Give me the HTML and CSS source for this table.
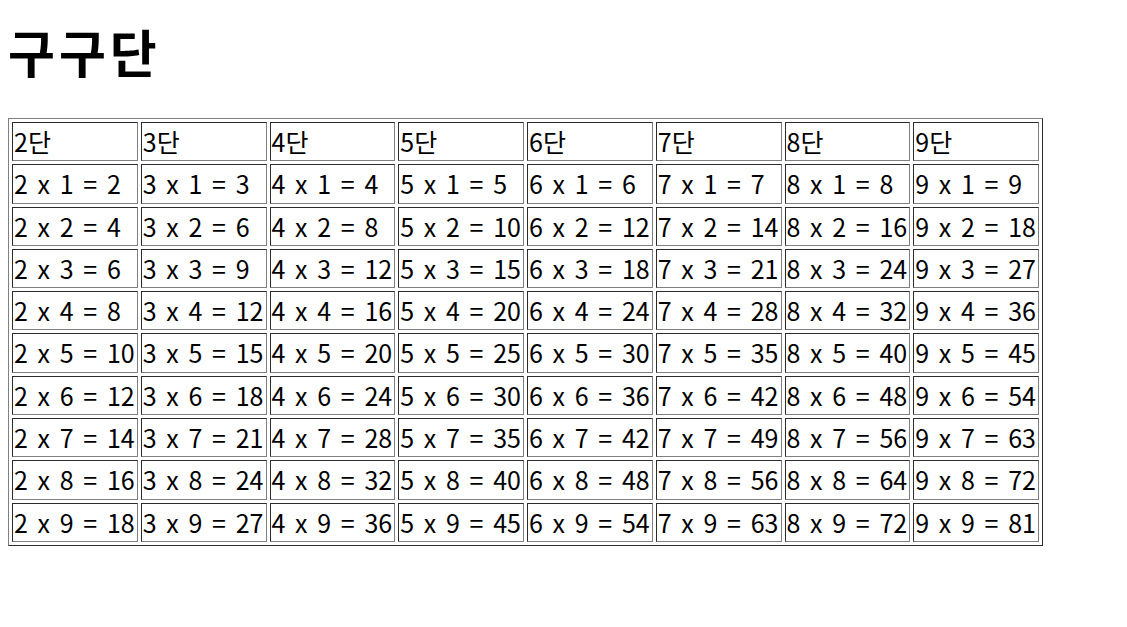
FILE: index.html
```html
<!DOCTYPE html>
<html lang="ko">
<head>
<meta charset="utf-8">
<title>구구단</title>
<link rel="stylesheet" href="styles.css">
</head>
<body>
<h1 class="title">구구단</h1>
<table class="gugu">
<tr><td>2단</td><td>3단</td><td>4단</td><td>5단</td><td>6단</td><td>7단</td><td>8단</td><td>9단</td></tr>
<tr><td>2 x 1 = 2</td><td>3 x 1 = 3</td><td>4 x 1 = 4</td><td>5 x 1 = 5</td><td>6 x 1 = 6</td><td>7 x 1 = 7</td><td>8 x 1 = 8</td><td>9 x 1 = 9</td></tr>
<tr><td>2 x 2 = 4</td><td>3 x 2 = 6</td><td>4 x 2 = 8</td><td>5 x 2 = 10</td><td>6 x 2 = 12</td><td>7 x 2 = 14</td><td>8 x 2 = 16</td><td>9 x 2 = 18</td></tr>
<tr><td>2 x 3 = 6</td><td>3 x 3 = 9</td><td>4 x 3 = 12</td><td>5 x 3 = 15</td><td>6 x 3 = 18</td><td>7 x 3 = 21</td><td>8 x 3 = 24</td><td>9 x 3 = 27</td></tr>
<tr><td>2 x 4 = 8</td><td>3 x 4 = 12</td><td>4 x 4 = 16</td><td>5 x 4 = 20</td><td>6 x 4 = 24</td><td>7 x 4 = 28</td><td>8 x 4 = 32</td><td>9 x 4 = 36</td></tr>
<tr><td>2 x 5 = 10</td><td>3 x 5 = 15</td><td>4 x 5 = 20</td><td>5 x 5 = 25</td><td>6 x 5 = 30</td><td>7 x 5 = 35</td><td>8 x 5 = 40</td><td>9 x 5 = 45</td></tr>
<tr><td>2 x 6 = 12</td><td>3 x 6 = 18</td><td>4 x 6 = 24</td><td>5 x 6 = 30</td><td>6 x 6 = 36</td><td>7 x 6 = 42</td><td>8 x 6 = 48</td><td>9 x 6 = 54</td></tr>
<tr><td>2 x 7 = 14</td><td>3 x 7 = 21</td><td>4 x 7 = 28</td><td>5 x 7 = 35</td><td>6 x 7 = 42</td><td>7 x 7 = 49</td><td>8 x 7 = 56</td><td>9 x 7 = 63</td></tr>
<tr><td>2 x 8 = 16</td><td>3 x 8 = 24</td><td>4 x 8 = 32</td><td>5 x 8 = 40</td><td>6 x 8 = 48</td><td>7 x 8 = 56</td><td>8 x 8 = 64</td><td>9 x 8 = 72</td></tr>
<tr><td>2 x 9 = 18</td><td>3 x 9 = 27</td><td>4 x 9 = 36</td><td>5 x 9 = 45</td><td>6 x 9 = 54</td><td>7 x 9 = 63</td><td>8 x 9 = 72</td><td>9 x 9 = 81</td></tr>
</table>
</body>
</html>
```
FILE: styles.css
```css
body {
  margin: 8px;
  font-family: "Noto Sans CJK KR", "Noto Sans", sans-serif;
  color: #000;
  background: #fff;
}
.title {
  font-size: 51px;
  font-weight: bold;
  line-height: 70px;
  letter-spacing: 4px;
  margin: 8px 0 32px;
}
.gugu {
  border: 1px outset #808080;
  border-spacing: 3px;
  font-size: 25px;
  width: 1035px;
  table-layout: fixed;
}
.gugu td {
  border: 1px inset #808080;
  padding: 1px;
  height: 35.3px;
  line-height: 35.3px;
  white-space: nowrap;
  overflow: hidden;
  word-spacing: 2.7px;
}
```
